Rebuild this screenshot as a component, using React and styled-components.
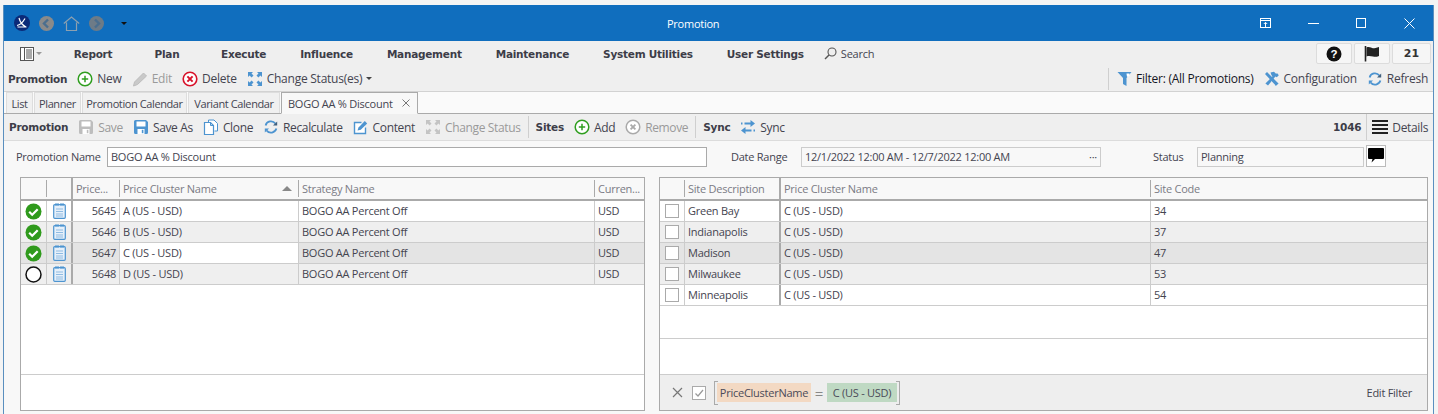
import styled, { createGlobalStyle } from 'styled-components';

const GlobalStyle = createGlobalStyle`
  html, body {
    margin: 0;
    padding: 0;
    background: #f4f4f4;
    overflow: hidden;
  }
  * {
    box-sizing: border-box;
  }
`;

const BLUE = '#4d94d0';
const font = `'Open Sans', 'Noto Sans', sans-serif`;
const boldFont = `
  font-family: 'DejaVu Sans', sans-serif;
  font-weight: 700;
  font-size: 10.5px;
  letter-spacing: -0.25px;
`;

// ---- icons ----
const Svg = ({ w = 16, h = 16, vb, children, ...rest }) => (
  <svg width={w} height={h} viewBox={vb || `0 0 ${w} ${h}`} style={{ flex: 'none', display: 'block' }} {...rest}>
    {children}
  </svg>
);

const PlusIcon = () => (
  <Svg>
    <circle cx='8' cy='8' r='6.8' fill='#fff' stroke='#2f9e1f' strokeWidth='1.5' />
    <path d='M8 4.8v6.4M4.8 8h6.4' stroke='#2f9e1f' strokeWidth='1.5' />
  </Svg>
);
const EditIcon = () => (
  <Svg>
    <path d='M1.5 15l1-4L11.5 2l3 3-9 8.5z' fill='#c9c9c9' stroke='#bdbdbd' />
  </Svg>
);
const DeleteIcon = () => (
  <Svg>
    <circle cx='8' cy='8' r='6.8' fill='#fff' stroke='#d8122a' strokeWidth='1.6' />
    <path d='M5.4 5.4l5.2 5.2M10.6 5.4l-5.2 5.2' stroke='#d8122a' strokeWidth='2' />
  </Svg>
);
const RemoveIcon = () => (
  <Svg>
    <circle cx='8' cy='8' r='6.8' fill='#fff' stroke='#aaa' strokeWidth='1.5' />
    <path d='M5.6 5.6l4.8 4.8M10.4 5.6l-4.8 4.8' stroke='#aaa' strokeWidth='1.8' />
  </Svg>
);
const ExpandIcon = ({ color = BLUE }) => (
  <Svg>
    <path
      d='M1 1h5L4.5 2.6 6.5 4.6 4.6 6.5 2.6 4.5 1 6zM15 1v5l-1.6-1.5-2 2-1.9-1.9 2-2L10 1zM1 15v-5l1.6 1.5 2-2 1.9 1.900-2 2L6 15zM15 15h-5l1.5-1.6-2-2 1.900-1.900 2 2L15 10z'
      fill={color}
    />
  </Svg>
);
const SaveIcon = ({ color = BLUE }) => (
  <Svg>
    <path d='M1 2.5A1.5 1.5 0 0 1 2.5 1H13l2 2v10.500a1.5 1.5 0 0 1-1.5 1.5h-11A1.5 1.5 0 0 1 1 13.500z' fill={color} />
    <rect x='3.5' y='2.5' width='9' height='5' fill='#fff' />
    <rect x='4.5' y='10' width='7' height='5' fill='#fff' />
    <rect x='8.8' y='10.8' width='1.6' height='3.4' fill={color} />
  </Svg>
);
const CloneIcon = () => (
  <Svg>
    <path d='M5.5 3.5V1h5.5l3.5 3.5V12h-3' fill='#fff' stroke={BLUE} />
    <path d='M1.5 3.5h6l3 3v9h-9z' fill='#fff' stroke={BLUE} strokeWidth='1.2' />
    <path d='M7.5 3.5v3h3' fill='none' stroke={BLUE} />
  </Svg>
);
const RefreshIcon = () => (
  <Svg>
    <path d='M2.6 6.4A5.6 5.6 0 0 1 12.4 4.5' fill='none' stroke={BLUE} strokeWidth='1.8' />
    <path d='M14.2 2.4v4.2h-4.2z' fill='#3f5f7d' />
    <path d='M13.4 9.6A5.6 5.6 0 0 1 3.6 11.5' fill='none' stroke={BLUE} strokeWidth='1.8' />
    <path d='M1.8 13.6V9.4H6z' fill={BLUE} />
  </Svg>
);
const ContentIcon = () => (
  <Svg>
    <path d='M12.5 8.5v6h-11V3.5h7' fill='#fff' stroke={BLUE} strokeWidth='1.4' />
    <path d='M4.5 11.5l1-3L11.8 2l2.4 2.4L7.8 10.8z' fill={BLUE} />
  </Svg>
);
const SyncIcon = () => (
  <Svg>
    <path d='M10.5 1l4.5 3.500L10.500 8V5.600H4.500V3.400h6z' fill={BLUE} />
    <path d='M5.500 8L1 11.500 5.500 15v-2.400h6v-2.200h-6z' fill={BLUE} />
    <path d='M1 3.500h1.500v2H1zM13.500 10.500H15v2h-1.500z' fill={BLUE} />
  </Svg>
);
const FunnelIcon = () => (
  <Svg w={15} h={16}>
    <path d='M0.5 1h14L9.5 7v8L6 13V7z' fill={BLUE} />
    <path d='M9.5 2.5h3v2.5L10 6z' fill='#fff' />
  </Svg>
);
const ToolsIcon = () => (
  <Svg>
    <path d='M3 1l-2 2 9.8 10.6 1 1.4 2.8-2.6-1.4-1.2z' fill={BLUE} />
    <path d='M6.5 1.5L10 .8l2 2 1.2-.6 1.6 2-2 2-1.4-.8L4 14.6l-2.6-2.2 7-6.800-1-1.600z' fill={BLUE} />
  </Svg>
);
const DetailsIcon = () => (
  <Svg>
    <path d='M0 2h16M0 6h16M0 10h16M0 14h16' stroke='#222' strokeWidth='1.8' />
  </Svg>
);
const SearchIcon = () => (
  <Svg w={13} h={13}>
    <circle cx='8' cy='5' r='4' fill='none' stroke='#555' strokeWidth='1.1' />
    <path d='M5 8l-4 4' stroke='#555' strokeWidth='1.4' />
  </Svg>
);
const ListMenuIcon = () => (
  <Svg w={14} h={14}>
    <rect x='.5' y='.5' width='13' height='13' fill='#fff' stroke='#555' />
    <path d='M4.5 .5v13' stroke='#555' />
    <path d='M6 3h6M6 5h6M6 7h6M6 9h6M6 11h6' stroke='#555' />
  </Svg>
);
const HelpIcon = () => (
  <Svg>
    <circle cx='8' cy='8' r='7.5' fill='#111' />
    <text x='8' y='12' textAnchor='middle' fontSize='11.5' fontWeight='700' fill='#fff' fontFamily='Liberation Sans, sans-serif'>
      ?
    </text>
  </Svg>
);
const FlagIcon = () => (
  <Svg>
    <path d='M1.5 0v15.500' stroke='#222' strokeWidth='1.6' />
    <path d='M2.500 1.500c3-1.200 5 .8 6.500.8S12.500 1.800 15 1v9c-2.500 1-4 1-6 .6s-4-1-6.500-.2z' fill='#222' />
  </Svg>
);
const CheckedIcon = () => (
  <Svg w={17} h={17}>
    <circle cx='8.500' cy='8.500' r='8' fill='#2f9a1c' />
    <path d='M4.200 8.800l3 3 5.500-5.600' fill='none' stroke='#fff' strokeWidth='2.2' />
  </Svg>
);
const EmptyCircleIcon = () => (
  <Svg w={17} h={17}>
    <circle cx='8.500' cy='8.500' r='7.500' fill='#fff' stroke='#111' strokeWidth='1.500' />
  </Svg>
);
const NoteIcon = () => (
  <Svg w={13} h={16}>
    <rect x='.7' y='1.700' width='11.600' height='13.600' rx='1' fill='#e6f0fa' stroke={BLUE} strokeWidth='1.200' />
    <path d='M3 0v3M5 0v3M8 0v3M10 0v3' stroke={BLUE} />
    <path d='M3 6h7M3 8.500h7M3 11h7M3 13h7' stroke='#8fbbe2' />
  </Svg>
);
const BubbleIcon = () => (
  <Svg w={16} h={15}>
    <path d='M1 0h14a1 1 0 0 1 1 1v9a1 1 0 0 1-1 1H7l-3.500 3.500L4.500 11H1a1 1 0 0 1-1-1V1a1 1 0 0 1 1-1z' fill='#000' />
  </Svg>
);
const LogoIcon = () => (
  <Svg>
    <circle cx='8' cy='8' r='8' fill='#0b2a78' />
    <path d='M5 3c1 4 3 7 7 9M11 3.500C9 7 6.500 10 3 10.500M3.500 12h9' fill='none' stroke='#fff' strokeWidth='1.200' />
  </Svg>
);
const NavArrowIcon = ({ back, color = '#8a8a8a' }) => (
  <Svg w={15} h={15}>
    <circle cx='7.500' cy='7.500' r='7.500' fill={color} />
    <path d={back ? 'M9 3.500L5 7.500l4 4' : 'M6 3.500l4 4-4 4'} fill='none' stroke='#4b6e8e' strokeWidth='2.400' />
  </Svg>
);
const HomeIcon = () => (
  <Svg w={17} h={15}>
    <path d='M.8 7.500L8.500 1l7.700 6.500M3.500 6.500v8h10v-8' fill='none' stroke='#8da0b0' strokeWidth='1.200' />
  </Svg>
);

// ---- window ----
const Window = styled.div`
  margin: 5px 4px 0 3px;
  height: 409px;
  border-left: 1px solid #5a8fbf;
  border-right: 1px solid #5a8fbf;
  background: #f8f8f8;
  font-family: ${font};
  font-size: 11px;
  letter-spacing: -0.25px;
  color: #444450;
  overflow: hidden;
`;

const TitleBar = styled.div`
  height: 36px;
  background: #106ebe;
  display: flex;
  align-items: center;
  padding-left: 10px;
  color: #fff;
`;

const TitleNav = styled.div`
  display: flex;
  align-items: center;
  gap: 9px;
  width: 653px;
`;

const TitleCaret = styled.span`
  width: 0;
  height: 0;
  border-left: 3px solid transparent;
  border-right: 3px solid transparent;
  border-top: 3px solid #111;
  margin-left: 8px;
`;

const TitleText = styled.div`
  flex: 1;
`;

const WinControls = styled.div`
  display: flex;
  align-items: center;
`;

const WinButton = styled.div`
  width: 48px;
  height: 36px;
  display: flex;
  align-items: center;
  justify-content: center;
`;

const MenuBar = styled.div`
  height: 25px;
  background: #efefef;
  display: flex;
  align-items: center;
  padding-left: 16px;
`;

const MenuIconBox = styled.div`
  width: 36px;
  display: flex;
  align-items: center;
  gap: 2px;
`;

const SmallCaret = styled.span`
  width: 0;
  height: 0;
  border-left: 3px solid transparent;
  border-right: 3px solid transparent;
  border-top: 3px solid ${p => p.$color || '#999'};
`;

const MenuItem = styled.div`
  min-width: 74px;
  padding: 1px 17px 0;
  text-align: center;
  ${boldFont}
  color: #3d3d48;
  white-space: nowrap;
`;

const SearchBox = styled.div`
  display: flex;
  align-items: center;
  gap: 4px;
  margin-left: 3px;
`;

const TopButtons = styled.div`
  margin-left: auto;
  display: flex;
  gap: 2px;
  padding-right: 2px;
`;

const TopButton = styled.div`
  width: ${p => p.$w}px;
  height: 21px;
  background: #f6f6f6;
  border: 1px solid #dcdcdc;
  border-radius: 2px;
  display: flex;
  align-items: center;
  justify-content: center;
  font-family: 'DejaVu Sans', sans-serif;
  font-weight: 700;
  font-size: 11px;
  letter-spacing: 0;
  color: #333;
`;

const Toolbar = styled.div`
  height: ${p => p.$h}px;
  background: #efefef;
  display: flex;
  align-items: center;
  padding-left: ${p => p.$pl}px;
  border-bottom: 1px solid ${p => p.$line};
  font-size: 12px;
  letter-spacing: ${p => p.$spacing ?? -0.25}px;
`;

const GroupLabel = styled.div`
  ${boldFont}
  color: #3d3d48;
  margin-right: ${p => p.$mr ?? 10}px;
  white-space: nowrap;
`;

const ToolButton = styled.div`
  display: flex;
  align-items: center;
  gap: 4px;
  margin-right: ${p => p.$mr ?? 10}px;
  color: ${p => (p.$off ? '#9a9a9a' : p.$dark ? '#15151f' : '#44444f')};
  white-space: nowrap;
`;

const ToolSep = styled.div`
  width: 1px;
  height: ${p => p.$h || 22}px;
  flex: none;
  background: #cfcfcf;
  margin: ${p => p.$margin || '0 7px 0 -3px'};
`;

const RightTools = styled.div`
  margin-left: auto;
  display: flex;
  align-items: center;
  height: 100%;
`;

const TabStrip = styled.div`
  height: 22px;
  background: #fafafa;
  border-bottom: 1px solid #aaa;
  display: flex;
  align-items: flex-end;
  padding-left: 2px;
`;

const Tab = styled.div`
  height: ${p => (p.$active ? 22 : 21)}px;
  width: ${p => p.$w}px;
  display: flex;
  align-items: center;
  justify-content: ${p => (p.$active ? 'space-between' : 'center')};
  padding: ${p => (p.$active ? '0 7px 0 6px' : '0')};
  background: ${p => (p.$active ? '#f8f8f8' : '#f0f0f0')};
  border: 1px solid ${p => (p.$active ? '#aaa' : '#ddd')};
  border-bottom: ${p => (p.$active ? '1px solid #f8f8f8' : 'none')};
  margin-right: 1px;
  margin-bottom: ${p => (p.$active ? -1 : 0)}px;
  letter-spacing: ${p => (p.$active ? -0.25 : -0.4)}px;
  white-space: nowrap;
`;

const FormRow = styled.div`
  height: 36px;
  display: flex;
  align-items: flex-start;
  padding: 6px 0 0 12px;
`;

const FieldLabel = styled.div`
  width: ${p => p.$w}px;
  margin-left: ${p => p.$ml || 0}px;
  line-height: 19px;
  white-space: nowrap;
`;

const FieldInput = styled.div`
  width: ${p => p.$w}px;
  height: 20px;
  background: ${p => (p.$plain ? '#f8f8f8' : '#fff')};
  border: 1px solid ${p => (p.$plain ? '#ccc' : '#aaa')};
  padding: 0 3px 1px;
  display: flex;
  align-items: center;
  justify-content: space-between;
  white-space: nowrap;
`;

const CommentButton = styled.div`
  width: 20px;
  height: 22px;
  margin-left: 2px;
  margin-top: -2px;
  background: #fff;
  border: 1px solid #bbb;
  display: flex;
  justify-content: center;
  padding-top: 2px;
`;

const Panels = styled.div`
  display: flex;
  gap: 14px;
  padding-left: 16px;
`;

const Grid = styled.div`
  width: ${p => p.$w}px;
  height: 234px;
  background: #fff;
  border: 1px solid #aaa;
  display: flex;
  flex-direction: column;
`;

const HeaderRow = styled.div`
  height: 23px;
  flex: none;
  background: #f8f8f8;
  border-bottom: 2px solid #aaa;
  display: flex;
`;

const HeaderCell = styled.div`
  width: ${p => p.$w}px;
  flex: ${p => (p.$w ? 'none' : 1)};
  display: flex;
  align-items: center;
  justify-content: space-between;
  padding: 0 8px 0 3px;
  color: #7b7b85;
  position: relative;
  white-space: nowrap;
  border-right: ${p => (p.$thick ? '2px solid #aaa' : 'none')};

  &::after {
    content: '';
    display: ${p => (p.$thick || p.$last ? 'none' : 'block')};
    position: absolute;
    right: 0;
    top: 2px;
    bottom: 2px;
    width: 1px;
    background: #aaa;
  }
`;

const SortArrow = styled.span`
  width: 0;
  height: 0;
  border-left: 5px solid transparent;
  border-right: 5px solid transparent;
  border-bottom: 5px solid #888;
  margin-right: -1px;
`;

const Row = styled.div`
  height: 21px;
  flex: none;
  display: flex;
  background: ${p => p.$bg};
  border-bottom: 1px solid #ccc;
  color: #44444f;
`;

const Cell = styled.div`
  width: ${p => p.$w}px;
  flex: ${p => (p.$w ? 'none' : 1)};
  display: flex;
  align-items: center;
  justify-content: ${p => (p.$align === 'center' ? 'center' : p.$align === 'right' ? 'flex-end' : 'flex-start')};
  padding: ${p => (p.$align === 'center' ? '0' : '0 3px 1px')};
  background: ${p => p.$bg || 'transparent'};
  border-right: ${p => (p.$thick ? '2px solid #aaa' : p.$last ? 'none' : '1px solid #ccc')};
  white-space: nowrap;
`;

const GridSpacer = styled.div`
  flex: 1;
`;

const GridLine = styled.div`
  height: ${p => p.$h}px;
  flex: none;
  border-bottom: 1px solid #ccc;
`;

const GridFooter = styled.div`
  height: 36px;
  flex: none;
  border-top: 1px solid ${p => p.$line || '#ccc'};
  background: ${p => p.$bg || '#fff'};
  display: flex;
  align-items: center;
  padding-left: 12px;
`;

const CheckBox = styled.div`
  width: 14px;
  height: 14px;
  flex: none;
  margin-left: ${p => p.$ml || 0}px;
  background: #fff;
  border: 1px solid #aaa;
  display: flex;
  align-items: center;
  justify-content: center;
`;

const Bracket = styled.div`
  display: flex;
  align-items: center;
  height: 24px;
  margin-left: 8px;
  padding: 0 2px;
  position: relative;
  border-left: 1px solid #aaa;
  border-right: 1px solid #aaa;
`;

const BracketEnds = styled.div`
  position: absolute;
  inset: 0;
  border-top: 1px solid #aaa;
  border-bottom: 1px solid #aaa;
  mask: linear-gradient(90deg, #000 3px, transparent 3px, transparent calc(100% - 3px), #000 calc(100% - 3px));
`;

const FilterTag = styled.div`
  height: 19px;
  width: ${p => p.$w}px;
  flex: none;
  background: ${p => p.$bg};
  display: flex;
  align-items: center;
  justify-content: center;
  color: #4a4a58;
`;

const EqualsSign = styled.span`
  width: 16px;
  text-align: center;
  font-size: 15px;
  color: #888;
`;

const EditFilter = styled.div`
  margin-left: auto;
  padding-right: 15px;
`;

const leftColumns = [26, 26, 47, 179, 296];
const leftRows = [
  { id: 5645, name: 'A (US - USD)', bg: '#fff', done: true },
  { id: 5646, name: 'B (US - USD)', bg: '#efefef', done: true },
  { id: 5647, name: 'C (US - USD)', bg: '#e4e4e4', done: true, focus: true },
  { id: 5648, name: 'D (US - USD)', bg: '#efefef', done: false },
];

const rightRows = [
  { site: 'Green Bay', code: 34, bg: '#fff' },
  { site: 'Indianapolis', code: 37, bg: '#efefef' },
  { site: 'Madison', code: 47, bg: '#e4e4e4' },
  { site: 'Milwaukee', code: 53, bg: '#efefef' },
  { site: 'Minneapolis', code: 54, bg: '#fff' },
];

const menuItems = ['Report', 'Plan', 'Execute', 'Influence', 'Management', 'Maintenance', 'System Utilities', 'User Settings'];

const App = () => {
  return (
    <>
      <GlobalStyle />
      <Window>
        <TitleBar>
          <TitleNav>
            <LogoIcon />
            <NavArrowIcon back />
            <HomeIcon />
            <NavArrowIcon color='#6d7b87' />
            <TitleCaret />
          </TitleNav>
          <TitleText>Promotion</TitleText>
          <WinControls>
            <WinButton>
              <Svg w={11} h={10}>
                <rect x='.5' y='.5' width='10' height='9' fill='none' stroke='#fff' />
                <path d='M0 2.500h11M5.500 9V4.500M3.800 6l1.700-1.700L7.200 6' fill='none' stroke='#fff' />
              </Svg>
            </WinButton>
            <WinButton>
              <Svg w={11} h={10}>
                <path d='M0 5.500h11' stroke='#fff' />
              </Svg>
            </WinButton>
            <WinButton>
              <Svg w={10} h={10}>
                <rect x='.5' y='.5' width='9' height='9' fill='none' stroke='#fff' />
              </Svg>
            </WinButton>
            <WinButton>
              <Svg w={11} h={11}>
                <path d='M.5 .5l10 10M10.500 .5l-10 10' stroke='#fff' />
              </Svg>
            </WinButton>
          </WinControls>
        </TitleBar>

        <MenuBar>
          <MenuIconBox>
            <ListMenuIcon />
            <SmallCaret />
          </MenuIconBox>
          {menuItems.map(item => (
            <MenuItem key={item}>{item}</MenuItem>
          ))}
          <SearchBox>
            <SearchIcon />
            Search
          </SearchBox>
          <TopButtons>
            <TopButton $w={36}>
              <HelpIcon />
            </TopButton>
            <TopButton $w={36}>
              <FlagIcon />
            </TopButton>
            <TopButton $w={39}>21</TopButton>
          </TopButtons>
        </MenuBar>

        <Toolbar $h={26} $pl={4} $line='#d2d2d2'>
          <GroupLabel>Promotion</GroupLabel>
          <ToolButton>
            <PlusIcon />
            New
          </ToolButton>
          <ToolButton $off>
            <EditIcon />
            Edit
          </ToolButton>
          <ToolButton>
            <DeleteIcon />
            Delete
          </ToolButton>
          <ToolButton>
            <ExpandIcon />
            Change Status(es)
            <SmallCaret $color='#444' />
          </ToolButton>
          <RightTools>
            <ToolSep $margin='0 8px 0 0' />
            <ToolButton $dark>
              <FunnelIcon />
              Filter: (All Promotions)
            </ToolButton>
            <ToolButton>
              <ToolsIcon />
              Configuration
            </ToolButton>
            <ToolButton $mr={5}>
              <RefreshIcon />
              Refresh
            </ToolButton>
          </RightTools>
        </Toolbar>

        <TabStrip>
          <Tab $w={27}>List</Tab>
          <Tab $w={47}>Planner</Tab>
          <Tab $w={105}>Promotion Calendar</Tab>
          <Tab $w={92}>Variant Calendar</Tab>
          <Tab $w={137} $active>
            BOGO AA % Discount
            <Svg w={8} h={8}>
              <path d='M.5 .5l7 7M7.500 .5l-7 7' stroke='#777' />
            </Svg>
          </Tab>
        </TabStrip>

        <Toolbar $h={27} $pl={5} $line='#dcdcdc' $spacing={-0.35}>
          <GroupLabel>Promotion</GroupLabel>
          <ToolButton $off>
            <SaveIcon color='#bdbdbd' />
            Save
          </ToolButton>
          <ToolButton>
            <SaveIcon />
            Save As
          </ToolButton>
          <ToolButton>
            <CloneIcon />
            Clone
          </ToolButton>
          <ToolButton>
            <RefreshIcon />
            Recalculate
          </ToolButton>
          <ToolButton>
            <ContentIcon />
            Content
          </ToolButton>
          <ToolButton $off>
            <ExpandIcon color='#c4c4c4' />
            Change Status
          </ToolButton>
          <ToolSep />
          <GroupLabel>Sites</GroupLabel>
          <ToolButton>
            <PlusIcon />
            Add
          </ToolButton>
          <ToolButton $off>
            <RemoveIcon />
            Remove
          </ToolButton>
          <ToolSep />
          <GroupLabel>Sync</GroupLabel>
          <ToolButton>
            <SyncIcon />
            Sync
          </ToolButton>
          <RightTools>
            <GroupLabel $mr={5}>1046</GroupLabel>
            <ToolSep $h={26} $margin='0 5px 0 0' />
            <ToolButton $mr={5}>
              <DetailsIcon />
              Details
            </ToolButton>
          </RightTools>
        </Toolbar>

        <FormRow>
          <FieldLabel $w={91}>Promotion Name</FieldLabel>
          <FieldInput $w={600}>BOGO AA % Discount</FieldInput>
          <FieldLabel $w={70} $ml={24}>
            Date Range
          </FieldLabel>
          <FieldInput $w={300} $plain>
            12/1/2022 12:00 AM - 12/7/2022 12:00 AM
            <span>···</span>
          </FieldInput>
          <FieldLabel $w={44} $ml={52}>
            Status
          </FieldLabel>
          <FieldInput $w={167} $plain>
            Planning
          </FieldInput>
          <CommentButton>
            <BubbleIcon />
          </CommentButton>
        </FormRow>

        <Panels>
          <Grid $w={625}>
            <HeaderRow>
              <HeaderCell $w={leftColumns[0]} />
              <HeaderCell $w={leftColumns[1]} $thick />
              <HeaderCell $w={leftColumns[2]}>Price...</HeaderCell>
              <HeaderCell $w={leftColumns[3]}>
                Price Cluster Name
                <SortArrow />
              </HeaderCell>
              <HeaderCell $w={leftColumns[4]}>Strategy Name</HeaderCell>
              <HeaderCell $last>Curren...</HeaderCell>
            </HeaderRow>
            {leftRows.map(r => (
              <Row key={r.id} $bg={r.bg}>
                <Cell $w={leftColumns[0]} $align='center'>
                  {r.done ? <CheckedIcon /> : <EmptyCircleIcon />}
                </Cell>
                <Cell $w={leftColumns[1]} $align='center' $thick>
                  <NoteIcon />
                </Cell>
                <Cell $w={leftColumns[2]} $align='right'>
                  {r.id}
                </Cell>
                <Cell $w={leftColumns[3]} $bg={r.focus ? '#fff' : undefined}>
                  {r.name}
                </Cell>
                <Cell $w={leftColumns[4]}>BOGO AA Percent Off</Cell>
                <Cell $last>USD</Cell>
              </Row>
            ))}
            <GridSpacer />
            <GridFooter />
          </Grid>

          <Grid $w={769}>
            <HeaderRow>
              <HeaderCell $w={25} />
              <HeaderCell $w={96} $thick>
                Site Description
              </HeaderCell>
              <HeaderCell $w={370}>Price Cluster Name</HeaderCell>
              <HeaderCell $last>Site Code</HeaderCell>
            </HeaderRow>
            {rightRows.map(r => (
              <Row key={r.code} $bg={r.bg}>
                <Cell $w={25} $align='center'>
                  <CheckBox />
                </Cell>
                <Cell $w={96} $thick>
                  {r.site}
                </Cell>
                <Cell $w={370}>C (US - USD)</Cell>
                <Cell $last>{r.code}</Cell>
              </Row>
            ))}
            <GridLine $h={33} />
            <GridSpacer />
            <GridFooter $bg='#eee' $line='#ccc'>
              <Svg w={11} h={11}>
                <path d='M1 1l9 9M10 1l-9 9' stroke='#777' strokeWidth='1.200' />
              </Svg>
              <CheckBox $ml={9}>
                <Svg w={10} h={10}>
                  <path d='M1.500 5.500l2.500 2.500 5-6' fill='none' stroke='#999' strokeWidth='1.200' />
                </Svg>
              </CheckBox>
              <Bracket>
                <BracketEnds />
                <FilterTag $w={94} $bg='#f3d9c3'>
                  PriceClusterName
                </FilterTag>
                <EqualsSign>=</EqualsSign>
                <FilterTag $w={70} $bg='#bfd9c3'>
                  C (US - USD)
                </FilterTag>
              </Bracket>
              <EditFilter>Edit Filter</EditFilter>
            </GridFooter>
          </Grid>
        </Panels>
      </Window>
    </>
  );
};

export default App;
